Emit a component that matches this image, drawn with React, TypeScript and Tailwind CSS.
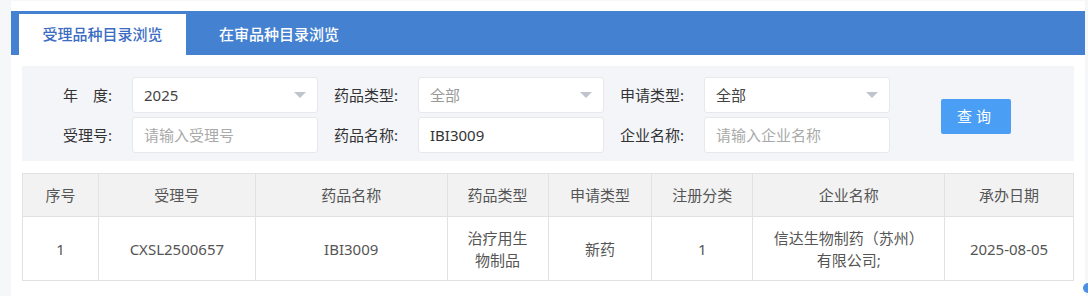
import { ReactNode } from "react";

const font = { fontFamily: '"Noto Sans", "Noto Sans CJK SC", sans-serif' };

function Caret() {
  return (
    <svg width="12" height="6" viewBox="0 0 12 6" className="shrink-0">
      <path d="M0 0 L12 0 L6 6 Z" fill="#c0c4cc" />
    </svg>
  );
}

function Label({ children }: { children: ReactNode }) {
  return (
    <div className="w-[100px] shrink-0 pr-[20px] text-right text-[15px] text-[#333]">
      {children}
    </div>
  );
}

function Select({ value, muted }: { value: string; muted?: boolean }) {
  return (
    <div className="flex h-[36px] w-[186px] shrink-0 items-center justify-between rounded-[3px] border border-[#e6e8ec] bg-white pl-[11px] pr-[11px]">
      <span className={`text-[15px] ${muted ? "text-[#999]" : "text-[#444]"}`}>{value}</span>
      <Caret />
    </div>
  );
}

function Input({ value, placeholder }: { value?: string; placeholder?: string }) {
  return (
    <div className="flex h-[36px] w-[186px] shrink-0 items-center rounded-[3px] border border-[#e6e8ec] bg-white pl-[11px]">
      {value ? (
        <span className="text-[15px] text-[#333]">{value}</span>
      ) : (
        <span className="text-[15px] text-[#aaa]">{placeholder}</span>
      )}
    </div>
  );
}

const columns = [
  { title: "序号", w: "w-[76px]" },
  { title: "受理号", w: "w-[157px]" },
  { title: "药品名称", w: "w-[192px]" },
  { title: "药品类型", w: "w-[101px]" },
  { title: "申请类型", w: "w-[104px]" },
  { title: "注册分类", w: "w-[101px]" },
  { title: "企业名称", w: "w-[192px]" },
  { title: "承办日期", w: "w-[129px]" },
];

export default function App() {
  return (
    <div className="relative h-[296px] w-[1088px] overflow-hidden bg-[#f6f7f9]" style={font}>
      <div className="ml-[11px] mt-[1px] h-[295px] w-[1074px] bg-white pt-[10px]">
        {/* tabs */}
        <div className="flex h-[44px] items-end bg-[#4481d1] pl-[8px]">
          <div className="flex h-[41px] w-[167px] items-center justify-center bg-white text-[15px] font-medium text-[#3b6cc3]">
            受理品种目录浏览
          </div>
          <div className="ml-[8px] flex h-[41px] w-[170px] items-center justify-center text-[15px] font-medium text-white">
            在审品种目录浏览
          </div>
        </div>

        {/* filters */}
        <div className="mx-[11px] mt-[11px] flex h-[95px] items-start bg-[#f4f5f9] pl-[10px] pt-[11px]">
          <div className="flex flex-col gap-[4px]">
            <div className="flex items-center">
              <Label>
                年<span className="inline-block w-[15px]" />度:
              </Label>
              <Select value="2025" />
              <Label>药品类型:</Label>
              <Select value="全部" muted />
              <Label>申请类型:</Label>
              <Select value="全部" />
            </div>
            <div className="flex items-center">
              <Label>受理号:</Label>
              <Input placeholder="请输入受理号" />
              <Label>药品名称:</Label>
              <Input value="IBI3009" />
              <Label>企业名称:</Label>
              <Input placeholder="请输入企业名称" />
            </div>
          </div>
          <button className="ml-[51px] mt-[22px] h-[35px] w-[70px] rounded-[2px] bg-[#4a9ff5] text-[15px] tracking-[4px] text-white">
            查询
          </button>
        </div>

        {/* table */}
        <table className="mx-[11px] mt-[12px] table-fixed border-collapse text-[15px] text-[#555]">
          <thead>
            <tr className="h-[43px] bg-[#f2f2f2]">
              {columns.map((c) => (
                <th key={c.title} className={`${c.w} border border-[#e2e2e2] font-normal`}>
                  {c.title}
                </th>
              ))}
            </tr>
          </thead>
          <tbody>
            <tr className="h-[64px] text-center leading-[22px]">
              <td className="border border-[#e2e2e2]">1</td>
              <td className="border border-[#e2e2e2]">CXSL2500657</td>
              <td className="border border-[#e2e2e2]">IBI3009</td>
              <td className="border border-[#e2e2e2] px-[18px]">治疗用生物制品</td>
              <td className="border border-[#e2e2e2]">新药</td>
              <td className="border border-[#e2e2e2]">1</td>
              <td className="border border-[#e2e2e2] px-[12px]">
                信达生物制药（苏州）
                <br />
                有限公司;
              </td>
              <td className="border border-[#e2e2e2]">2025-08-05</td>
            </tr>
          </tbody>
        </table>
      </div>
      <div className="absolute left-[1083px] top-[283px] h-[10px] w-[10px] rounded-full bg-[#4a8fe8]" />
    </div>
  );
}
